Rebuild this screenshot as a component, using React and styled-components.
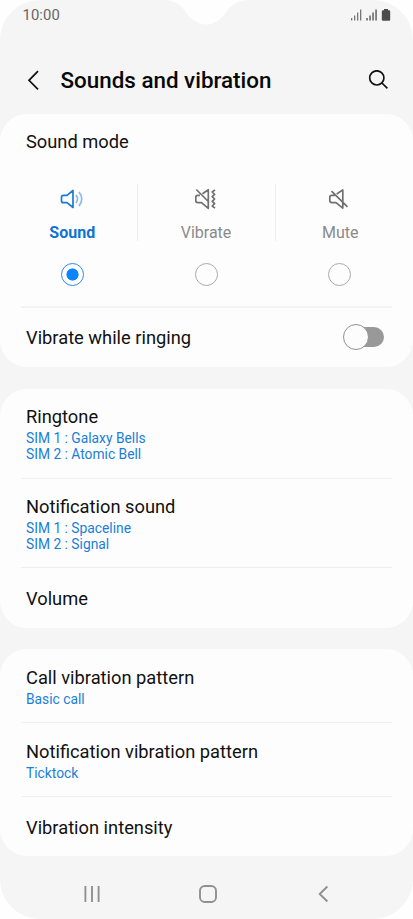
import React, { useState } from "react";
import styled, { createGlobalStyle, ThemeProvider } from "styled-components";

const theme = {
  colors: {
    screen: "#f5f5f5",
    card: "#fdfdfd",
    line: "#efefef",
    text: "#111111",
    muted: "#8a8a8a",
    link: "#1a7fd8",
    accent: "#0a84ff",
  },
};

const modes = [
  { id: "sound", label: "Sound", Icon: SoundIcon },
  { id: "vibrate", label: "Vibrate", Icon: VibrateIcon },
  { id: "mute", label: "Mute", Icon: MuteIcon },
];

function App() {
  const [mode, setMode] = useState("sound");
  const [ringVibrate, setRingVibrate] = useState(false);

  return (
    <ThemeProvider theme={theme}>
      <GlobalStyle />
      <Screen>
        <Notch viewBox="0 0 100 25">
          <path d="M6 0C18 0 24 4 29 11C35 20 42 24.5 50 24.5C58 24.5 65 20 71 11C76 4 82 0 94 0Z" />
        </Notch>
        <StatusBar>
          <Clock>10:00</Clock>
          <StatusIcons />
        </StatusBar>
        <Header>
          <IconButton aria-label="Back">
            <svg width="13" height="21" viewBox="0 0 13 21">
              <path d="M12 1.2L3 10.3L12 19.4" />
            </svg>
          </IconButton>
          <PageTitle>Sounds and vibration</PageTitle>
          <IconButton aria-label="Search">
            <svg width="20" height="20" viewBox="0 0 20 20">
              <circle cx="8.8" cy="7.9" r="7.1" />
              <path d="M13.9 13L19.4 18.4" />
            </svg>
          </IconButton>
        </Header>

        <Cards>
          <Card>
            <SectionTitle>Sound mode</SectionTitle>
            <Modes>
              {modes.map(({ id, label, Icon }) => (
                <Mode key={id} onClick={() => setMode(id)}>
                  <ModeHead $active={mode === id}>
                    <Icon />
                    <ModeLabel $active={mode === id}>{label}</ModeLabel>
                  </ModeHead>
                  <Radio $checked={mode === id} />
                </Mode>
              ))}
            </Modes>
            <Divider $thick />
            <SwitchRow>
              <RowTitle>Vibrate while ringing</RowTitle>
              <Toggle
                $on={ringVibrate}
                aria-label="Vibrate while ringing"
                onClick={() => setRingVibrate(!ringVibrate)}
              />
            </SwitchRow>
          </Card>

          <Card>
            <Row $height={89}>
              <RowTitle>Ringtone</RowTitle>
              <RowValue>SIM 1 : Galaxy Bells</RowValue>
              <RowValue>SIM 2 : Atomic Bell</RowValue>
            </Row>
            <Divider />
            <Row $height={88}>
              <RowTitle>Notification sound</RowTitle>
              <RowValue>SIM 1 : Spaceline</RowValue>
              <RowValue>SIM 2 : Signal</RowValue>
            </Row>
            <Divider />
            <SingleRow $height={60}>
              <RowTitle>Volume</RowTitle>
            </SingleRow>
          </Card>

          <Card>
            <Row $height={73}>
              <RowTitle>Call vibration pattern</RowTitle>
              <RowValue>Basic call</RowValue>
            </Row>
            <Divider />
            <Row $height={73}>
              <RowTitle>Notification vibration pattern</RowTitle>
              <RowValue>Ticktock</RowValue>
            </Row>
            <Divider />
            <SingleRow $height={59}>
              <RowTitle>Vibration intensity</RowTitle>
            </SingleRow>
          </Card>
        </Cards>

        <NavBar>
          <svg width="18" height="18" viewBox="0 0 18 18">
            <path d="M2.4 1V17M9 1V17M15.6 1V17" />
          </svg>
          <svg width="18" height="18" viewBox="0 0 18 18">
            <rect x="1" y="1" width="16" height="16" rx="4.8" />
          </svg>
          <svg width="18" height="18" viewBox="0 0 18 18">
            <path d="M13.4 1.5L5.7 9L13.4 16.5" />
          </svg>
        </NavBar>
      </Screen>
    </ThemeProvider>
  );
}

function StatusIcons() {
  return (
    <svg width="42" height="14" viewBox="0 0 42 14" fill="#4c4c4c">
      <g fill="#777777">
        <rect x="1" y="10" width="1.3" height="2.5" />
        <rect x="4" y="7.5" width="1.3" height="5" />
        <rect x="7" y="4.5" width="1.3" height="8" />
        <rect x="10" y="1.5" width="1.3" height="11" />
      </g>
      <rect x="16.4" y="10" width="1.3" height="2.5" />
      <rect x="19.4" y="7.5" width="1.3" height="5" />
      <rect x="22.4" y="4.5" width="1.3" height="8" />
      <rect x="25.4" y="1.5" width="1.3" height="11" />
      <path d="M34 1H38V2.3H39Q40.2 2.3 40.2 3.5V11.4Q40.2 12.7 39 12.7H33Q31.8 12.7 31.8 11.4V3.5Q31.8 2.3 33 2.3H34Z" />
    </svg>
  );
}

function SoundIcon() {
  return (
    <svg width="24" height="22" viewBox="0 0 24 22">
      <path d="M13 2.5V19.5L7 14.7H3.5Q1.5 14.7 1.5 12.7V9.3Q1.5 7.3 3.5 7.3H7Z" />
      <path opacity=".5" d="M16 7Q19 11 16 15M19 4Q24.5 11 19 18" />
    </svg>
  );
}

function VibrateIcon() {
  return (
    <svg width="24" height="22" viewBox="0 0 24 22">
      <path d="M8.5 5.8L14.3 1.7V20.3L7.5 14.7H4Q1.8 14.7 1.8 12.7V9.3Q1.8 7.3 4 7.3H6M2.3 1.5L14.3 13.5" />
      <path d="M21 1.8L18.2 4L20.6 6.3L18.2 8.7L20.6 11L18.2 13.4L20.6 15.7L18.2 18L21 20.2" />
    </svg>
  );
}

function MuteIcon() {
  return (
    <svg width="24" height="22" viewBox="0 0 24 22">
      <path d="M8.7 6L14.8 1.9V20.1L8 14.7H4Q1.8 14.7 1.8 12.7V9.3Q1.8 7.3 4 7.3H6.8M3.5 3.2L19.5 18.8" />
    </svg>
  );
}

const GlobalStyle = createGlobalStyle`
  * {
    box-sizing: border-box;
  }

  body {
    margin: 0;
    background: #fefefe;
    font-family: Roboto, "Liberation Sans", sans-serif;
  }

  button {
    border: 0;
    padding: 0;
    background: none;
    font: inherit;
    cursor: pointer;
  }

  svg {
    display: block;
    flex: none;
  }
`;

const Screen = styled.div`
  position: relative;
  display: flex;
  flex-direction: column;
  width: 413px;
  height: 919px;
  overflow: hidden;
  border-radius: 40px;
  background: ${({ theme }) => theme.colors.screen};
`;

const Notch = styled.svg`
  position: absolute;
  top: 0;
  left: 156px;
  width: 100px;
  height: 25px;
  fill: #fefefe;
`;

const StatusBar = styled.div`
  display: flex;
  align-items: center;
  justify-content: space-between;
  height: 30px;
  padding: 0 21px 0 22.5px;
`;

const Clock = styled.span`
  font-size: 14.8px;
  letter-spacing: 0.1px;
  color: #666666;
`;

const Header = styled.header`
  display: flex;
  align-items: center;
  height: 84px;
  padding: 16px 25px 0 26px;
`;

const IconButton = styled.button`
  fill: none;
  stroke: #111111;
  stroke-width: 1.7;
`;

const PageTitle = styled.h1`
  flex: 1;
  margin: 0 0 0 21.5px;
  font-size: 22.4px;
  font-weight: 500;
  white-space: nowrap;
  color: #080808;
`;

const Cards = styled.main`
  display: flex;
  flex-direction: column;
  gap: 21.5px;
`;

const Card = styled.section`
  border-radius: 27px;
  background: ${({ theme }) => theme.colors.card};
`;

const RowTitle = styled.div`
  font-size: 18.3px;
  line-height: 24px;
  color: ${({ theme }) => theme.colors.text};
`;

const SectionTitle = styled(RowTitle)`
  padding: 16px 26px 0;
`;

const RowValue = styled.div`
  font-size: 13.8px;
  line-height: 16px;
  color: ${({ theme }) => theme.colors.link};
`;

const Row = styled.div`
  display: flex;
  flex-direction: column;
  justify-content: center;
  height: ${({ $height }) => $height}px;
  padding: 1px 26px 0;

  ${RowTitle} + ${RowValue} {
    margin-top: 1px;
  }
`;

const SingleRow = styled(Row)`
  padding-top: 2px;
`;

const SwitchRow = styled.div`
  display: flex;
  align-items: center;
  justify-content: space-between;
  height: 59px;
  padding: 0 29px 0 26px;
`;

const Divider = styled.div`
  height: ${({ $thick }) => ($thick ? 2 : 1)}px;
  margin: 0 21px;
  background: ${({ theme, $thick }) => ($thick ? "#f4f4f4" : theme.colors.line)};
`;

const Modes = styled.div`
  display: grid;
  grid-template-columns: 129.5px 138px 129.5px;
  padding: 30px 8px 20px;
`;

const Mode = styled.button`
  display: flex;
  flex-direction: column;
  align-items: center;
  gap: 22px;
`;

const ModeHead = styled.span`
  display: flex;
  flex-direction: column;
  align-items: center;
  gap: 12px;
  width: 100%;
  height: 57px;
  padding-top: 4px;
  fill: none;
  stroke: ${({ $active }) => ($active ? "#1a7bd0" : "#707070")};
  stroke-width: 1.7;
  stroke-linejoin: round;

  ${Mode}:not(:last-child) > & {
    border-right: 1px solid #ededed;
  }
`;

const ModeLabel = styled.span`
  font-size: 16px;
  line-height: 22px;
  font-weight: ${({ $active }) => ($active ? 700 : 400)};
  color: ${({ theme, $active }) => ($active ? "#0f73cf" : theme.colors.muted)};
`;

const Radio = styled.span`
  width: 23px;
  height: 23px;
  margin-right: 1px;
  border: 1.4px solid ${({ $checked }) => ($checked ? "#2f8ae6" : "#aaaaaa")};
  border-radius: 50%;
  background: ${({ theme, $checked }) =>
    $checked
      ? `radial-gradient(circle, ${theme.colors.accent} 5.7px, transparent 6.4px)`
      : "none"};
`;

const Toggle = styled.button`
  display: flex;
  align-items: center;
  justify-content: ${({ $on }) => ($on ? "flex-end" : "flex-start")};
  width: 40px;
  height: 20px;
  margin-bottom: 1px;
  border-radius: 10px;
  background: ${({ theme, $on }) => ($on ? theme.colors.accent : "#999999")};

  &::before {
    content: "";
    flex: none;
    width: 24px;
    height: 24px;
    margin-left: -1px;
    border: 1px solid #919191;
    border-radius: 50%;
    background: #fcfcfc;
  }
`;

const NavBar = styled.nav`
  display: flex;
  align-items: center;
  justify-content: space-between;
  flex: 1;
  padding: 12px 81px 0 83px;
  fill: none;
  stroke: #909090;
  stroke-width: 1.9;
`;

export default App;
